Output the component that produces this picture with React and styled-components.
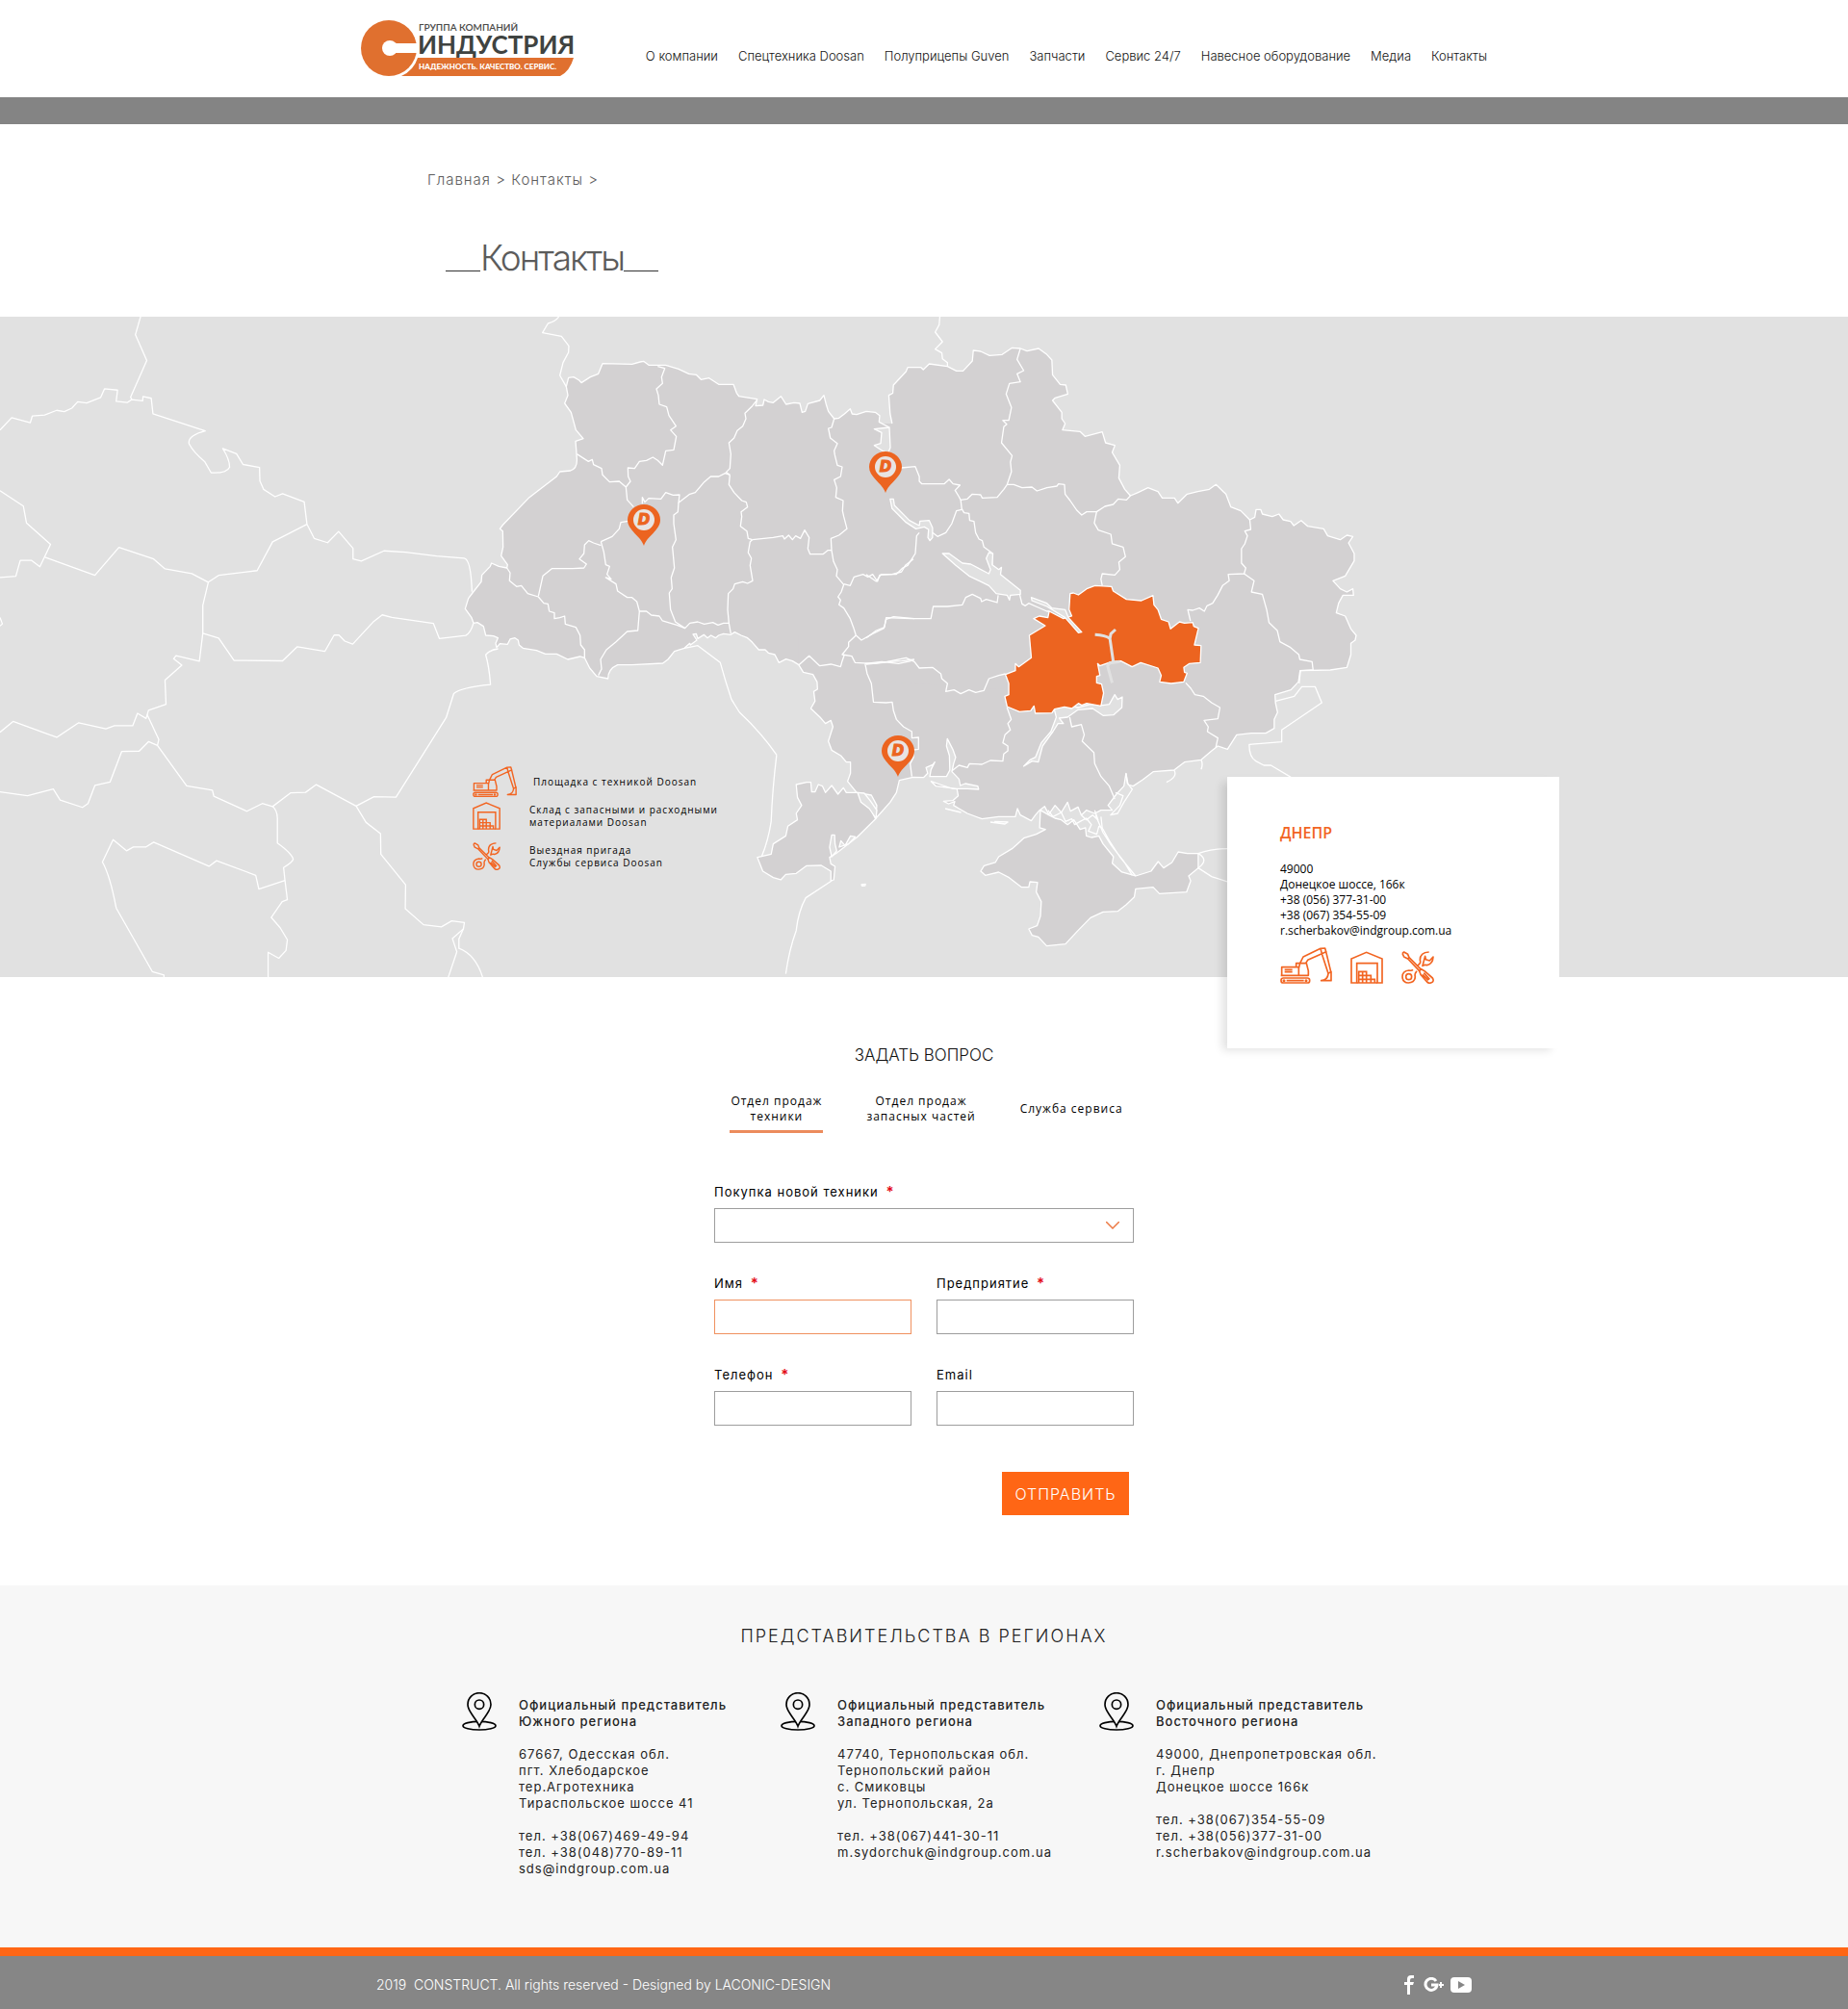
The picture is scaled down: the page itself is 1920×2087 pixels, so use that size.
import React, { Component } from 'react'
import styled, { createGlobalStyle } from 'styled-components'

const GlobalStyle = createGlobalStyle`
  * { box-sizing: border-box; }
  body {
    margin: 0;
    background: #fff;
    color: #111;
    font-family: Inter, "Noto Sans", sans-serif;
    font-size: 14px;
  }
  a { color: inherit; text-decoration: none; }
  h1, h2, h3, p { margin: 0; font-weight: 400; }
`;

const Container = styled.div`
  position: relative;
  max-width: 1170px;
  margin: 0 auto;
`;

/* header */
const Header = styled.header`
  border-bottom: 28px solid #848484;
`;
const HeaderRow = styled(Container)`
  display: flex;
  justify-content: space-between;
  align-items: flex-start;
  padding: 20px 0;
`;
const Logo = styled.a`
  display: block;
  height: 61px;
`;
const Nav = styled.nav`
  display: flex;
  gap: 21px;
  padding-top: 28px;
  font-size: 13px;
  font-weight: 300;
  line-height: 20px;
  white-space: nowrap;
`;

/* page head */
const PageHead = styled(Container)`
  padding: 46px 69px 40px;
  color: #5c5c5c;
`;
const Crumbs = styled.nav`
  font-size: 15px;
  font-weight: 300;
  line-height: 24px;
  letter-spacing: 1px;
`;
const PageTitle = styled.h1`
  display: flex;
  align-items: flex-end;
  margin: 48px 0 0 19px;
  && { font-weight: 300; }
  font-size: 37px;
  line-height: 42px;
  letter-spacing: -2px;
  &::before, &::after {
    content: "";
    width: 36px;
    border-bottom: 1px solid #333;
    margin-bottom: 7px;
  }
`;

/* map */
const MapSection = styled.section`
  position: relative;
  height: 686px;
  background: #e1e1e1;
`;
const MapCanvas = styled.svg`
  position: absolute;
  inset: 0;
  width: 100%;
  height: 100%;
  path { vector-effect: non-scaling-stroke; }
`;
const Legend = styled.ul`
  position: relative;
  list-style: none;
  margin: 0;
  padding: 467px 0 0 116px;
  color: #000;
  font-family: "Open Sans", "Noto Sans", sans-serif;
  font-size: 10px;
  font-weight: 500;
  line-height: 13px;
  letter-spacing: 1px;
`;
const LegendItem = styled.li`
  display: flex;
  align-items: center;
  gap: 17px;
  margin-bottom: ${props => props.$space}px;
`;
const LegendIcon = styled.span`
  display: flex;
  min-width: 42px;
`;
const OfficeCard = styled.article`
  position: absolute;
  top: 478px;
  right: -75px;
  width: 345px;
  min-height: 282px;
  padding: 46px 55px;
  background: #fff;
  box-shadow: -7px 4px 9px -2px rgba(0, 0, 0, 0.12);
  color: #000;
  font-family: "Open Sans", "Noto Sans", sans-serif;
  font-size: 12px;
  line-height: 16px;
`;
const OfficeName = styled.h2`
  margin-bottom: 18px;
  color: #f26522;
  && { font-weight: 600; }
  font-size: 16px;
  line-height: 24px;
`;
const OfficeIcons = styled.div`
  display: flex;
  align-items: flex-end;
  gap: 19px;
  margin-top: 9px;
`;

/* form */
const Form = styled.form`
  width: 436px;
  max-width: 100%;
  margin: 0 auto;
  padding: 69px 0 73px;
`;
const FormTitle = styled.h2`
  font-size: 17px;
  && { font-weight: 300; }
  line-height: 24px;
  text-align: center;
`;
const Tabs = styled.div`
  display: flex;
  justify-content: center;
  gap: 44px;
  margin: 28px 0 51px;
  padding-left: 6px;
`;
const Tab = styled.button`
  padding: 0 1px 6px;
  border: 0;
  border-bottom: 3px solid ${props => props.$active ? "#ec8c5c" : "transparent"};
  background: none;
  color: #000;
  font-family: "Open Sans", "Noto Sans", sans-serif;
  font-size: 12px;
  line-height: 16px;
  letter-spacing: 1px;
  white-space: pre-line;
  cursor: pointer;
`;
const Fields = styled.div`
  display: grid;
  grid-template-columns: 1fr 1fr;
  gap: 32px 26px;
`;
const Field = styled.div`
  position: relative;
  display: flex;
  flex-direction: column;
  gap: 7px;
  grid-column: ${props => props.$wide ? "span 2" : "auto"};
  label {
    height: 20px;
    color: #000;
    font-size: 13px;
    line-height: 20px;
    letter-spacing: 1px;
  }
  input, select {
    width: 100%;
    height: 36px;
    padding: 0 12px;
    border: 1px solid ${props => props.$active ? "#f0915f" : "#9d9d9d"};
    border-radius: 0;
    background: #fff;
    font: inherit;
    outline: none;
    appearance: none;
  }
`;
const Required = styled.span`
  margin-left: 3px;
  color: #e30613;
  font-size: 15px;
  font-weight: 600;
`;
const Arrow = styled.svg`
  position: absolute;
  right: 15px;
  bottom: 14px;
  pointer-events: none;
`;
const Submit = styled.button`
  display: block;
  width: 132px;
  height: 45px;
  margin: 48px 5px 0 auto;
  border: 0;
  background: #ff6615;
  color: #fff;
  font-family: inherit;
  font-size: 16px;
  font-weight: 300;
  letter-spacing: 1px;
  cursor: pointer;
`;

/* regions */
const Regions = styled.section`
  padding: 41px 0 73px;
  background: #f7f7f7;
  color: #222;
`;
const RegionsTitle = styled.h2`
  && { font-weight: 300; }
  font-size: 18px;
  line-height: 24px;
  letter-spacing: 2px;
  text-align: center;
`;
const RegionGrid = styled.div`
  display: grid;
  grid-template-columns: repeat(3, 298px);
  justify-content: center;
  gap: 33px;
  margin-top: 46px;
`;
const Region = styled.article`
  display: flex;
  align-items: flex-start;
  gap: 23px;
`;
const RegionText = styled.div`
  padding-top: 5px;
  font-size: 13px;
  line-height: 17px;
  letter-spacing: 1px;
  white-space: pre-line;
  h3 {
    font-size: 13px;
    font-weight: 500;
  }
  p { margin-top: 17px; }
`;

const Footer = styled.footer`
  border-top: 9px solid #ff6615;
  background: #868686;
  color: #fff;
`;
const FooterRow = styled(Container)`
  display: flex;
  justify-content: space-between;
  align-items: center;
  height: 55px;
  padding: 4px 16px 0;
  font-weight: 300;
  white-space: pre;
`;
const Social = styled.div`
  display: flex;
  align-items: center;
  gap: 7px;
  a { display: flex; }
`;

const navItems = ["О компании", "Спецтехника Doosan", "Полуприцепы Guven", "Запчасти", "Сервис 24/7", "Навесное оборудование", "Медиа", "Контакты"];

const tabs = ["Отдел продаж\nтехники", "Отдел продаж\nзапасных частей", "Служба сервиса"];

const fields = [
  { id: "name", label: "Имя", required: true, active: true },
  { id: "company", label: "Предприятие", required: true },
  { id: "phone", label: "Телефон", required: true, type: "tel" },
  { id: "email", label: "Email", type: "email" }
];

const regions = [
  {
    name: "Официальный представитель\nЮжного региона",
    address: "67667, Одесская обл.\nпгт. Хлебодарское\nтер.Агротехника\nТираспольское шоссе 41",
    phones: "тел. +38(067)469-49-94\nтел. +38(048)770-89-11",
    email: "sds@indgroup.com.ua"
  },
  {
    name: "Официальный представитель\nЗападного региона",
    address: "47740, Тернопольская обл.\nТернопольский район\nс. Смиковцы\nул. Тернопольская, 2а",
    phones: "тел. +38(067)441-30-11",
    email: "m.sydorchuk@indgroup.com.ua"
  },
  {
    name: "Официальный представитель\nВосточного региона",
    address: "49000, Днепропетровская обл.\nг. Днепр\nДонецкое шоссе 166к",
    phones: "тел. +38(067)354-55-09\nтел. +38(056)377-31-00",
    email: "r.scherbakov@indgroup.com.ua"
  }
];

/* The map is kept in sheets, every sheet has its own grid. */
const europe = {
  grid: "translate(0 -9) scale(.35714 .44643)",
  lines: [
    "M409 20 394 62 427 122 380 207 383 213",
    "M0 284 34 255 88 267 94 251 130 249 165 238 187 241 209 233 226 218 252 221 293 208 304 188 342 191 338 217 370 220 383 213 415 216 416 206 440 210 445 246 597 286Q545 297 550 316 562 335 596 358L614 383Q660 385 668 370 668 352 648 327L688 339 707 364 755 371 756 402 767 422 800 439 822 432 885 451 893 503",
    "M893 503 914 536 953 546 985 520 1027 559 1027 584 1051 589 1117 565 1180 568 1270 577 1350 582Q1370 584 1373 660",
    "M893 503 793 544 748 611 636 622 606 638 558 618 480 607 447 584 346 557 276 622 131 580",
    "M0 425 68 461 77 500 147 550 116 602 91 587 59 587 46 624 0 627M0 720 7 735 0 740",
    "M606 638 590 692 590 757 580 822 512 809 505 816 529 831 480 866 483 922 432 936 425 955 400 943 386 972 333 972 308 979 229 965 165 999 38 962 0 987",
    "M590 757 636 768 681 820 822 821 865 788 945 799 972 761 986 761 1003 775 1026 782 1085 731 1112 714 1140 720 1261 734 1278 769 1355 762Q1370 755 1377 734",
    "M1449 793Q1425 795 1413 807 1423 835 1427 876 1340 883 1320 897L1298 953 1152 1138 1088 1137 1036 1159 920 1109 889 1127 846 1128 793 1160 763 1153 718 1171 622 1136 618 1122 543 1112 458 1018 462 1004 428 946",
    "M458 1018 432 1009 405 1031 354 1032 320 1103 276 1111 256 1153 240 1162 175 1145 155 1119 80 1135 0 1126",
    "M793 1160Q806 1168 807 1187L807 1245Q850 1270 853 1283 850 1290 825 1302L829 1332 836 1377 821 1381 789 1418 815 1442 836 1470 832 1495 811 1513 780 1499 780 1560",
    "M829 1332 753 1352 744 1320 630 1286 608 1299 447 1243 425 1254 388 1254 368 1263 329 1237 298 1289Q320 1320 338 1396L443 1544 477 1552 477 1560",
    "M1036 1159 1065 1197 1107 1223 1108 1271 1180 1342 1179 1398 1232 1435 1284 1440 1314 1426 1351 1430 1348 1445 1316 1467 1329 1498 1303 1560",
    "M1348 1445 1335 1468 1335 1490Q1385 1505 1405 1560"
  ]
};

const west = {
  grid: "translate(470 11) scale(.33333)",
  outline: "M1080 1052 1060 1040 1040 1034 1018 1045 1005 1020 985 1015 975 1005 955 1005 935 982 920 968 900 960 880 950 868 958 845 955 830 960 820 968 806 960 795 968 784 958 765 970 760 955 750 957 762 975 742 990 740 985 723 1000 692 1010 672 1035 656 1047 560 1052 515 1052Q485 1065 485 1095L450 1088 428 1062 412 1030 398 1026 360 1035 325 1018 290 1018 262 1007 220 1000 208 990 205 975 195 968 180 972 172 988 148 986 138 998 135 985 142 968 128 962 104 960 97 932 78 920 66 922 60 905 40 877 50 845 65 825 90 793 92 772 118 745 122 735 145 745 170 750 172 740 152 712 158 685 157 635 148 628 158 615 240 530 325 465 335 450 368 447Q390 440 388 410L386 380 384 355 408 347 385 320 370 265 350 237 360 212 355 185 362 157 378 155 395 165 402 173 430 155 455 145 468 113 560 115 585 108 596 106 612 118 665 118 705 130 737 145 760 148 775 163 800 158 830 178 876 178 886 205 893 215 950 224 945 245 968 243 972 225 985 232 1000 235 1024 215 1040 240 1065 235 1083 237 1090 265 1100 262 1108 238 1145 228 1158 212 1165 240 1172 262 1190 285 1205 283 1222 270 1240 254 1246 270 1260 272 1290 262 1318 265 1332 275 1330 295 1362 312",
  rest: "L1372 300 1360 212 1440 122 1440 1052Z",
  lines: [
    "M640 122 662 128 652 155 655 175 636 192 642 212 645 240 668 248 675 275 697 308 680 320 698 340 690 382 665 385 655 430 640 415 625 405 605 415 583 418 568 440 547 438 548 465 555 480 541 498",
    "M388 395 424 418 436 412 440 428 465 440 468 460 490 482 520 480 541 498 545 538 565 560",
    "M548 604 525 608 520 628 498 652 463 668",
    "M592 550 592 530 600 545 612 533 650 535 665 515 688 523 708 522 705 547 740 520 757 515 785 482 805 465 830 465 850 455 865 460",
    "M950 226 935 245 912 268 915 285 905 308 888 322 878 345 862 360 868 395 865 440 853 452 865 460",
    "M865 460 862 490 878 515 902 540 916 545 920 560 900 575 902 590 898 620 918 635 922 658 935 662",
    "M705 547 703 575 690 585 690 612 697 662 686 685 692 750 682 780 685 815 676 828 680 880 695 918 725 938 740 922 765 918 785 925 812 920 828 928 845 922 862 922",
    "M935 662 928 668 922 702 932 720 928 742 936 790 920 798 905 793 880 800 875 815 860 830 858 880 862 922 868 955",
    "M935 662 1000 655 1030 650 1035 660 1048 648 1060 662 1070 650 1085 658 1098 632 1112 655 1108 690 1115 707 1155 707 1170 695 1182 695",
    "M1190 285 1182 312 1172 315 1178 345 1200 362 1190 385 1192 398 1200 430 1215 435 1210 465 1190 475 1198 500 1195 530 1218 540 1216 572 1220 590 1230 628 1205 648 1180 658 1182 695",
    "M1182 695 1188 730 1200 755 1197 775 1220 802 1212 825 1202 840 1210 850 1205 865 1220 875 1240 908 1250 935 1258 960",
    "M1220 800 1240 805 1252 778 1280 770 1295 778 1310 770 1325 792 1332 772 1370 770 1400 762 1412 742 1437 722",
    "M1258 960 1275 975 1310 955 1345 938 1352 910 1375 902 1440 908",
    "M1258 960 1235 982 1235 995 1215 1020 1245 1025 1255 1045 1310 1048 1360 1042 1400 1040 1440 1035",
    "M1080 1052 1112 1024 1145 1055 1180 1050 1210 1058 1215 1040 1222 1020",
    "M463 680 440 672 425 665 412 678 410 705 396 722 418 738 410 750 375 752 310 752 282 775 268 838",
    "M170 750 180 765 178 790 200 808 215 805 235 830 268 840 285 860 298 862 302 885 318 890 318 908 335 905 350 900 352 925 385 935 398 960 400 990 412 1005 412 1030",
    "M463 668 472 700 478 740 490 745 482 770 495 785 478 780 510 800 515 822 545 842 560 842 575 855 583 885",
    "M583 885 578 945 545 948 510 980 480 1005 462 1035 465 1065 455 1085",
    "M583 885 605 885 620 897 645 900 655 915 700 928 725 938",
    "M723 1000 765 992 835 1045Q850 1100 870 1160L895 1200Q960 1260 1011 1333",
    "M332 -33Q322 -18 298 -12L281 17 340 28 363 58 362 78 345 110 335 150 355 185"
  ],
  water: ["M1362 312 1315 317 1338 328 1335 362 1315 368 1340 385 1358 392 1365 375Z"]
};

const east = {
  grid: "translate(900 11) scale(.34439 .33333)",
  outline: "M78 300 72 270 68 212 80 205 82 180 120 138 125 125 165 125 172 132 190 114 245 122 272 136 292 136 320 105 323 72 345 75 372 88 410 85 440 64 465 66 485 74 520 66 545 85 560 102 562 148 585 178 602 180 608 208 570 220 562 228 590 265 590 285 600 300 592 320 645 325 660 340 712 326 722 360 750 368 742 390 765 430 762 470 780 505 797 525 820 515 850 500 880 512 893 532 930 532 940 548 968 520 1000 512 1035 505 1055 490 1085 520 1100 560 1130 572 1157 600 1172 592 1176 568 1190 568 1195 582 1225 590 1245 582 1258 600 1280 605 1290 618 1312 602 1332 620 1380 628 1392 650 1430 662 1450 648 1468 652 1455 672 1472 705 1472 728 1445 775 1408 790 1430 815 1450 825 1468 815 1470 835 1438 835 1425 860 1418 890 1445 900 1462 940 1478 960 1475 975 1462 985 1462 1020 1450 1060 1400 1068 1310 1070 1306 1110",
  rest: "L1230 1140 600 1140 0 1100 0 300Z",
  lines: [
    "M465 66 455 100 475 135 455 145 465 170 432 175 422 208 438 250 430 290 412 290 424 302 415 310 408 360 440 400 435 420 438 450 425 490",
    "M105 438 148 434 160 465 160 480 168 488 235 488 250 474 262 488 283 492 268 508 278 525 285 538 305 535 320 520 345 522 350 532 395 530 415 505 425 490 445 490 470 500 500 498 515 510 545 500 575 495 580 488 598 490 600 520 615 540 635 570 650 585 665 575 695 575",
    "M797 525 785 538 760 535 745 552 720 558 695 575 688 610 700 632 738 645 742 675 775 685 782 715 762 732 765 755 750 772 712 768 708 785 712 805",
    "M285 538 288 565 295 578 310 580 312 602 325 605 330 640 340 660 350 665 355 685 378 702 380 740",
    "M288 568 272 572 258 612 240 640 215 652 200 640M160 640 152 650 148 705 125 742 110 750 90 770 45 770 30 792 0 770",
    "M0 968 30 945 55 935 60 905 135 908 195 908 202 870 245 870 290 865 300 842 320 832 345 845 348 855 362 848 395 858 398 835",
    "M0 1050 50 1045 120 1030 145 1042 160 1062 200 1060 225 1080 228 1095 245 1110 240 1135 265 1130 285 1142 310 1130 330 1138 355 1132 370 1095 400 1085 420 1080",
    "M460 820 470 862 480 868 490 860 512 870 545 885 552 885",
    "M1157 600 1160 630 1142 635 1150 650 1142 675 1132 690 1132 735 1145 750 1140 768 1092 770 1095 790 1075 805 1060 835 1045 860 1028 868 1020 885 1005 875 985 882 970 880 978 915",
    "M1140 768 1170 790 1162 825 1195 832 1208 880 1215 920 1240 945 1248 980 1280 998 1305 1020 1308 1035 1345 1042 1348 1068",
    "M222 -33 220 -8 208 15 230 45 208 68 228 80 230 98 245 110 245 122"
  ],
  water: [
    "M72 535 82 535 85 555 130 602 160 618 162 604 190 602 200 625 200 655 192 665 186 655 188 630 175 622 150 628 120 608 78 565Z",
    "M230 705 250 705 290 735 315 738 370 768 375 755 362 720 370 702 382 705 380 740 400 755 408 748 405 770 465 820 465 832 435 835 432 850 425 835 392 830 370 805 310 775 270 742Z",
    "M498 842 545 860 560 875 600 880 610 905 650 950 640 952 600 905 545 870 500 852Z"
  ],
  dnipro: "M615 830 625 828 640 834 665 815 690 805 740 808 745 822 785 848 830 852 865 836 868 865 880 880 890 910 912 918 918 940 945 918 960 922 985 920 988 932 1002 938 990 990 1010 992 1008 1045 975 1048 958 1060 960 1075 968 1078 958 1105 920 1110 885 1105 890 1085 880 1062 828 1045 802 1058 768 1040 740 1042 705 1055 698 1048 705 1085 695 1088 695 1108 710 1112 716 1140 708 1180 665 1172 650 1178 640 1172 620 1188 598 1183 568 1190 560 1202 510 1203 506 1180 496 1195 462 1198 425 1182 418 1150 430 1145 430 1110 420 1082 450 1070 450 1048 460 1058 498 1030 492 960 540 930 505 908 522 900 548 905 552 885 595 908 620 900 612 880Z",
  rivers: "M690 958Q722 960 735 970L738 955 752 942M735 970 745 1040M765 1042 735 1046 728 1055 742 1108"
};

const south = {
  grid: "translate(760 331) scale(.43374 .33333)",
  outline: "M161 92 172 115 195 122 205 145 206 168 197 175 200 205 190 228 212 255 225 275 238 265 243 285 232 330 240 358 262 375 275 395 285 395 285 430 278 455 300 490 335 498 348 530 346 570 380 520 395 490 402 452 435 442 460 443 470 430 466 412 482 403 487 395 478 418 475 440 515 440 523 420 522 375 515 345 517 322 530 355 537 380 532 400 528 425 545 448 548 468 560 462 590 470 592 480 565 478 530 478 500 465 478 455 490 470 540 478 543 500 530 515 508 517 520 525 535 518 532 530 545 540 565 555 600 572 640 565 680 565 685 540 692 560 718 578 728 560 738 545 750 533 760 558 775 530 790 552 805 520 812 548 830 535 838 560 850 545 870 555 885 545 912 545 902 530 922 495 940 470 945 430 950 465 962 470 985 450 1010 425 1060 420 1085 395 1125 388 1150 360 1165 345 1188 355 1210 310 1245 305 1280 305 1300 290 1300 262 1308 240 1303 210 1302 185 1340 170 1358 145 1362 110 1392 108",
  rest: "L1362 0 161 0Z",
  islands: [
    "M155 465 180 458 190 458 192 488 200 488 208 465 218 470 225 490 240 468 255 495 268 475 275 490 302 490 325 520 345 572 300 630 250 680 235 692 238 712 248 720 245 762 238 765 238 735 215 717 180 718 155 742 130 745 118 762 100 755 75 735 62 692 95 682 100 650 130 625 135 595 158 575 155 555 168 530 158 505Z",
    "M740 545 738 600 752 605 730 620 700 632 685 650 672 665 640 690 632 708 605 718 597 735 608 748 640 738 665 755 695 785 712 785 715 768 733 770 730 800 742 830 740 875 732 905 712 915 720 935 735 940 755 968 800 962 830 920 860 880 890 862 925 860 945 840 965 815 968 790 1010 785 1025 805 1090 800 1100 765 1095 750 1118 725 1118 680 1092 680 1070 675 1055 708 1035 725 1022 705 1005 735 968 750 935 738 912 710 915 690 890 650 880 625 862 630 850 625 848 600 835 605 820 575 805 590 790 575 775 570 760 560Z"
  ],
  lines: [
    "M320 88 325 120 335 150 340 208 370 210 385 208 388 235 395 262 412 285 432 300 432 320 448 318 448 355 435 357 436 380 428 400 432 440",
    "M320 88 360 82 400 88 430 80",
    "M528 422 545 405 565 412 570 400 600 402 620 390 650 392 652 370 662 360 662 345 650 335 655 310 668 295 662 275 670 262 660 225",
    "M810 255 815 285 838 278 845 310 840 330 868 365 870 400 885 440 905 470 918 510",
    "M1088 148 1100 165 1110 185 1130 190 1150 210 1170 225 1165 260 1132 265 1142 285 1140 300 1165 320 1160 350",
    "M108 373Q98 480 95 580 88 640 72 690",
    "M240 765 178 818Q160 860 155 920 138 980 130 1055M885 565 888 600 905 640 930 690 968 750M872 560 890 615 910 655 940 705 960 748",
    "M1118 680Q1150 665 1188 665M1118 680Q1145 700 1118 725L1150 752 1188 768",
    "M1303 205 1348 190 1366 160 1398 160 1414 210 1318 295 1318 332 1240 340Q1240 380 1256 392L1275 405 1292 405 1340 442",
    "M1060 420Q1070 440 1042 458M1125 388Q1130 400 1125 418M945 430 948 460 960 480 940 520 925 555 908 560 930 530 938 500 920 490",
    "M758 545 770 565 790 552 800 580 815 572 822 590 835 580 850 570 862 590 855 610 875 620 880 595 888 600M512 540 550 552M620 582 655 588 662 582 630 580M838 560 850 575 865 560 878 575 870 545"
  ],
  water: [
    "M302 490 318 492 332 515 348 545 346 570 330 540 310 520Z",
    "M240 690 235 660 240 622 247 622 248 650 252 672Z",
    "M258 660 262 640 272 655 285 625 297 628 280 650Z",
    "M311 777 321 775 320 780 313 781Z",
    "M772 225 800 215 830 225 860 215 890 218 905 215 918 185 925 200 936 192 935 225 915 248 890 250 865 228 830 232 805 255 785 258 795 275 782 275 770 300 745 345 735 395 720 392 700 408 715 388 728 380 742 335 765 300 778 255Z"
  ]
};

const offices = [[669, 195], [920, 140], [933, 435]];

const Excavator = ({ width }) => (
  <svg width={width} viewBox="0 0 162 114" fill="none" stroke="#f26522" strokeWidth="5" strokeLinejoin="round">
    <rect x="3" y="96" width="89" height="15" rx="7" />
    <path d="M20 104H74M5 88V62H58V88M2 88H88V74L82 50H62L58 66M50 62V50H62M14 70H38M14 77H38" />
    <path d="M62 50 72 30 126 4 140 3 143 14 130 20 86 40 80 50M126 4 130 20 150 82M143 14 158 76M150 82 159 76V104H128Q148 102 150 82" />
    <circle cx="12" cy="104" r="2" />
    <circle cx="81" cy="104" r="2" />
  </svg>
)

const Warehouse = ({ width }) => (
  <svg width={width} viewBox="0 0 102 102" fill="none" stroke="#f26522" strokeWidth="5">
    <path d="M3 99V24L50 4 99 24V99H84V38H20V99Z" />
    <path d="M26 99V64H50V76H64V88H76V99M26 76H50M26 88H64M38 64V99M50 76V99M64 88V99M20 99H84" />
  </svg>
)

const Tools = ({ width }) => (
  <svg width={width} viewBox="0 0 102 102" fill="none" stroke="#f26522" strokeWidth="5" strokeLinejoin="round">
    <path d="M3 7 8 3 20 10 24 20 62 58M3 7 8 18 20 24 56 62M20 24 24 20" />
    <path d="M56 62 62 56 72 62 97 84Q103 94 94 98 86 103 79 95L60 73ZM70 68 88 88M66 73 84 91" />
    <path d="M86 3Q58 4 58 28 60 34 58 38L50 46M36 58Q32 62 24 60 3 62 3 80 4 99 22 99 42 98 43 80 41 74 44 68L48 62M66 46Q72 42 80 44 98 40 99 18L88 30 76 26 74 16Z" />
    <circle cx="23" cy="80" r="9" />
  </svg>
)

const RegionPin = () => (
  <svg width="36" height="40" viewBox="0 0 108 120" fill="#f7f7f7" stroke="#000" strokeWidth="5">
    <ellipse cx="54" cy="104" rx="51" ry="13" />
    <path d="M54 106C46 82 18 62 18 38A36 36 0 0 1 90 38C90 62 62 82 54 106Z" />
    <circle cx="54" cy="38" r="14" />
  </svg>
)

const LogoMark = () => (
  <svg width="224" height="61" viewBox="0 0 224 61" role="img" aria-label="Индустрия">
    <circle cx="29" cy="30" r="29" fill="#e0702f" />
    <circle cx="30" cy="30" r="8" fill="#fff" />
    <path d="M34 25H60V35H34Z" fill="#fff" />
    <path d="M42 59Q55 53 59 40H221Q217 54 207 59Z" fill="#e0702f" />
    <g fontFamily="Lato, 'Open Sans', sans-serif">
      <text x="60" y="12" fontSize="10" fontWeight="600" fill="#4a4a48">ГРУППА КОМПАНИЙ</text>
      <text x="59" y="36" fontSize="26" fontWeight="700" fill="#3f4341">ИНДУСТРИЯ</text>
      <text x="60" y="52" fontSize="8" fontWeight="900" fill="#fff">НАДЕЖНОСТЬ. КАЧЕСТВО. СЕРВИС.</text>
    </g>
  </svg>
)

class MapDrawing extends Component {
  renderLand(sheet) {
    return (
      <g key={sheet.grid} transform={sheet.grid}>
        <path d={sheet.outline + sheet.rest} fill="#d3d1d2" />
      </g>
    )
  }
  renderLines(sheet) {
    return (
      <g key={sheet.grid} transform={sheet.grid} fill="none" stroke="#fff" strokeWidth="1.3" strokeLinejoin="round">
        {(sheet.islands || []).map(d => <path key={d} d={d} fill="#d3d1d2" />)}
        {sheet.outline && <path d={sheet.outline} />}
        {sheet.lines.map(d => <path key={d} d={d} />)}
        {sheet.dnipro && <path d={sheet.dnipro} fill="#ec6420" />}
        {(sheet.water || []).map(d => <path key={d} d={d} fill="#e1e1e1" />)}
        {sheet.rivers && <path d={sheet.rivers} stroke="#e1e1e1" strokeWidth="3" />}
      </g>
    )
  }
  render() {
    return (
      <MapCanvas viewBox="0 0 1920 686" preserveAspectRatio="xMidYMid slice" aria-hidden="true">
        {[west, south, east].map(this.renderLand)}
        {[europe, west, south, east].map(this.renderLines)}
        {offices.map(([x, y]) => (
          <g key={x} transform={`translate(${x} ${y})`}>
            <path d="M0 43C-3 33-17 27-17 16A17 16 0 0 1 17 16C17 27 3 33 0 43Z" fill="#ec6420" />
            <circle cy="16" r="11" fill="#e8e4e2" />
            <text y="21" textAnchor="middle" fontFamily="DejaVu Sans" fontSize="15" fontWeight="700" fontStyle="italic" fill="#ec6420" stroke="#ec6420">D</text>
          </g>
        ))}
      </MapCanvas>
    )
  }
}

class App extends Component {
  constructor(props) {
    super(props)
    this.state = { tab: 0 }
  }
  renderField(item) {
    return (
      <Field key={item.id} $active={item.active}>
        <label htmlFor={item.id}>{item.label} {item.required && <Required>*</Required>}</label>
        <input id={item.id} type={item.type || "text"} />
      </Field>
    )
  }
  renderRegion(item) {
    return (
      <Region key={item.name}>
        <RegionPin />
        <RegionText>
          <h3>{item.name}</h3>
          <p>{item.address}</p>
          <p>{item.phones}<br /><a href={`mailto:${item.email}`}>{item.email}</a></p>
        </RegionText>
      </Region>
    )
  }
  render() {
    return (
      <>
        <GlobalStyle />
        <Header>
          <HeaderRow>
            <Logo href="/"><LogoMark /></Logo>
            <Nav>
              {navItems.map(item => <a key={item} href="#">{item}</a>)}
            </Nav>
          </HeaderRow>
        </Header>
        <main>
          <PageHead>
            <Crumbs><a href="/">Главная</a> &gt; <a href="#">Контакты</a> &gt;</Crumbs>
            <PageTitle>Контакты</PageTitle>
          </PageHead>
          <MapSection>
            <MapDrawing />
            <Container>
              <Legend>
                <LegendItem $space={5}>
                  <LegendIcon><Excavator width="46" /></LegendIcon>
                  Площадка с техникой Doosan
                </LegendItem>
                <LegendItem $space={13}>
                  <LegendIcon><Warehouse width="29" /></LegendIcon>
                  <span>Склад с запасными и расходными<br />материалами Doosan</span>
                </LegendItem>
                <LegendItem $space={0}>
                  <LegendIcon><Tools width="29" /></LegendIcon>
                  <span>Выездная пригада<br />Службы сервиса Doosan</span>
                </LegendItem>
              </Legend>
              <OfficeCard>
                <OfficeName>ДНЕПР</OfficeName>
                <p>49000</p>
                <p>Донецкое шоссе, 166к</p>
                <p>+38 (056) 377-31-00</p>
                <p>+38 (067) 354-55-09</p>
                <p><a href="mailto:r.scherbakov@indgroup.com.ua">r.scherbakov@indgroup.com.ua</a></p>
                <OfficeIcons>
                  <Excavator width="54" />
                  <Warehouse width="34" />
                  <Tools width="34" />
                </OfficeIcons>
              </OfficeCard>
            </Container>
          </MapSection>
          <Form>
            <FormTitle>ЗАДАТЬ ВОПРОС</FormTitle>
            <Tabs>
              {tabs.map((name, i) => (
                <Tab key={name} type="button" $active={this.state.tab === i} onClick={() => this.setState({ tab: i })}>{name}</Tab>
              ))}
            </Tabs>
            <Fields>
              <Field $wide>
                <label htmlFor="topic">Покупка новой техники <Required>*</Required></label>
                <select id="topic" />
                <Arrow width="14" height="8" viewBox="0 0 14 8" fill="none" stroke="#ec7a45" strokeWidth="1.5">
                  <path d="M0 0 7 7 14 0" />
                </Arrow>
              </Field>
              {fields.map(this.renderField)}
            </Fields>
            <Submit type="submit">ОТПРАВИТЬ</Submit>
          </Form>
          <Regions>
            <RegionsTitle>ПРЕДСТАВИТЕЛЬСТВА В РЕГИОНАХ</RegionsTitle>
            <RegionGrid>
              {regions.map(this.renderRegion)}
            </RegionGrid>
          </Regions>
        </main>
        <Footer>
          <FooterRow>
            <span>2019  CONSTRUCT. All rights reserved - Designed by LACONIC-DESIGN</span>
            <Social>
              <a href="#" aria-label="Facebook">
                <svg width="15" height="20" viewBox="0 0 15 20" fill="#fff"><path d="M5 20V10H2V7H5V4Q5 0 9 0H12V3H10Q8 3 8 5V7H12L11 10H8V20Z" /></svg>
              </a>
              <a href="#" aria-label="Google Plus">
                <svg width="21" height="16" viewBox="0 0 21 16" fill="none" stroke="#fff" strokeWidth="3">
                  <path d="M13 4A6 6 0 1 0 14 8H8" />
                  <path d="M16 8H21M18 5V11" strokeWidth="2" />
                </svg>
              </a>
              <a href="#" aria-label="YouTube">
                <svg width="22" height="16" viewBox="0 0 22 16"><rect width="22" height="16" rx="4" fill="#fff" /><path d="M8 4 15 8 8 12Z" fill="#868686" /></svg>
              </a>
            </Social>
          </FooterRow>
        </Footer>
      </>
    )
  }
}

export default App
